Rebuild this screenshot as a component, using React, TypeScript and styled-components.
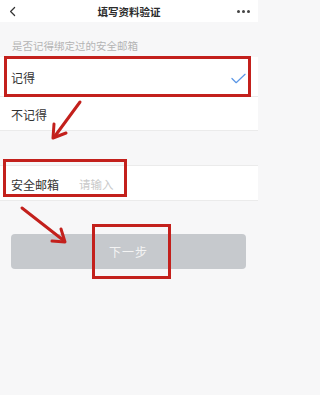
import React from "react";
import styled, { createGlobalStyle } from "styled-components";

const GlobalStyle = createGlobalStyle`
  html, body {
    margin: 0;
    padding: 0;
    background: #f7f7f8;
  }
  * {
    box-sizing: border-box;
  }
`;

const RED = "#c3201c";

const App = () => {
  return (
    <Page>
      <GlobalStyle />
      <Header>
        <BackIcon viewBox="0 0 10 12">
          <path d="M7 1 L2 6 L7 11" />
        </BackIcon>
        <Title>填写资料验证</Title>
        <More>
          <Dot />
          <Dot />
          <Dot />
        </More>
      </Header>

      <Hint>是否记得绑定过的安全邮箱</Hint>

      <OptionList>
        <Option $tall>
          <OptionText>记得</OptionText>
          <Check viewBox="0 0 16 11">
            <path d="M1 5.5 L5.5 10 L15 1" />
          </Check>
          <Highlight $top={-1} $left={4} $right={7} $bottom={-1} />
        </Option>
        <Option>
          <OptionText>不记得</OptionText>
        </Option>
      </OptionList>

      <InputRow>
        <Label>安全邮箱</Label>
        <Field placeholder="请输入" />
        <Highlight $top={-7} $left={3} $width={124} $bottom={3} />
      </InputRow>

      <ButtonWrap>
        <NextButton disabled>
          下一步
          <Highlight $top={-10} $left={81} $width={79} $bottom={-10} />
        </NextButton>
      </ButtonWrap>

      <Arrows viewBox="0 0 258 395">
        <g>
          <line x1="80" y1="102" x2="55" y2="136" />
          <polyline points="54,124 53,138 66,133" />
          <line x1="22" y1="208" x2="63" y2="240" />
          <polyline points="52,241 65,242 61,229" />
        </g>
      </Arrows>
    </Page>
  );
};

export default App;

const Page = styled.div`
  position: relative;
  width: 258px;
  min-height: 395px;
  background: #f7f7f8;
  font-family: "Noto Sans CJK SC", "Noto Sans", sans-serif;
  overflow: hidden;
`;

const Header = styled.div`
  height: 22px;
  background: #ffffff;
  display: flex;
  align-items: center;
  justify-content: space-between;
  padding: 0 7px 0 9px;
`;

const BackIcon = styled.svg`
  width: 8px;
  height: 11px;
  fill: none;
  stroke: #333;
  stroke-width: 1.5;
  stroke-linecap: round;
  stroke-linejoin: round;
`;

const Title = styled.div`
  font-size: 10.5px;
  font-weight: 700;
  color: #2b2b2b;
  margin-left: 4px;
`;

const More = styled.div`
  display: flex;
  gap: 2px;
  width: 14px;
`;

const Dot = styled.span`
  width: 3px;
  height: 3px;
  border-radius: 50%;
  background: #444;
`;

const Hint = styled.div`
  height: 35px;
  display: flex;
  align-items: flex-end;
  padding: 0 0 4px 12px;
  font-size: 10.5px;
  color: #b4b4b4;
`;

const OptionList = styled.div`
  background: #ffffff;
  border-bottom: 1px solid #ebebeb;
`;

const Option = styled.div<{ $tall?: boolean }>`
  position: relative;
  height: ${(p) => (p.$tall ? "40px" : "33px")};
  display: flex;
  align-items: center;
  justify-content: space-between;
  padding: 0 12px 0 11px;
  border-bottom: ${(p) => (p.$tall ? "1px solid #ebebeb" : "none")};
`;

const OptionText = styled.span`
  font-size: 12px;
  color: #333;
  padding-top: ${"2px"};
`;

const Check = styled.svg`
  width: 15px;
  height: 11px;
  fill: none;
  stroke: #5b97e6;
  stroke-width: 1.3;
  stroke-linecap: round;
  stroke-linejoin: round;
  margin-top: 3px;
`;

const Highlight = styled.span<{
  $top: number;
  $left: number;
  $right?: number;
  $width?: number;
  $bottom: number;
}>`
  position: absolute;
  top: ${(p) => p.$top}px;
  left: ${(p) => p.$left}px;
  ${(p) => (p.$width ? `width: ${p.$width}px;` : `right: ${p.$right}px;`)}
  bottom: ${(p) => p.$bottom}px;
  border: 3px solid ${RED};
  pointer-events: none;
`;

const InputRow = styled.div`
  position: relative;
  margin-top: 34px;
  height: 36px;
  background: #ffffff;
  border-top: 1px solid #ebebeb;
  border-bottom: 1px solid #ebebeb;
  display: flex;
  align-items: center;
  padding: 2px 11px 0;
  gap: 20px;
`;

const Label = styled.span`
  font-size: 12px;
  color: #333;
`;

const Field = styled.input`
  flex: 1;
  border: none;
  outline: none;
  background: transparent;
  font-family: inherit;
  font-size: 11.5px;
  color: #333;
  padding: 0;

  &::placeholder {
    color: #c9c9c9;
  }
`;

const ButtonWrap = styled.div`
  padding: 33px 12px 0 11px;
`;

const NextButton = styled.button`
  position: relative;
  width: 100%;
  height: 35px;
  border: none;
  border-radius: 4px;
  background: #c6c9cd;
  color: #f4f4f4;
  font-family: inherit;
  font-size: 12px;
  letter-spacing: 1px;
  display: flex;
  align-items: center;
  justify-content: center;
`;

const Arrows = styled.svg`
  position: absolute;
  left: 0;
  top: 0;
  width: 258px;
  height: 395px;
  pointer-events: none;
  fill: none;
  stroke: ${RED};
  stroke-width: 3;
  stroke-linecap: round;
  stroke-linejoin: round;
`;
